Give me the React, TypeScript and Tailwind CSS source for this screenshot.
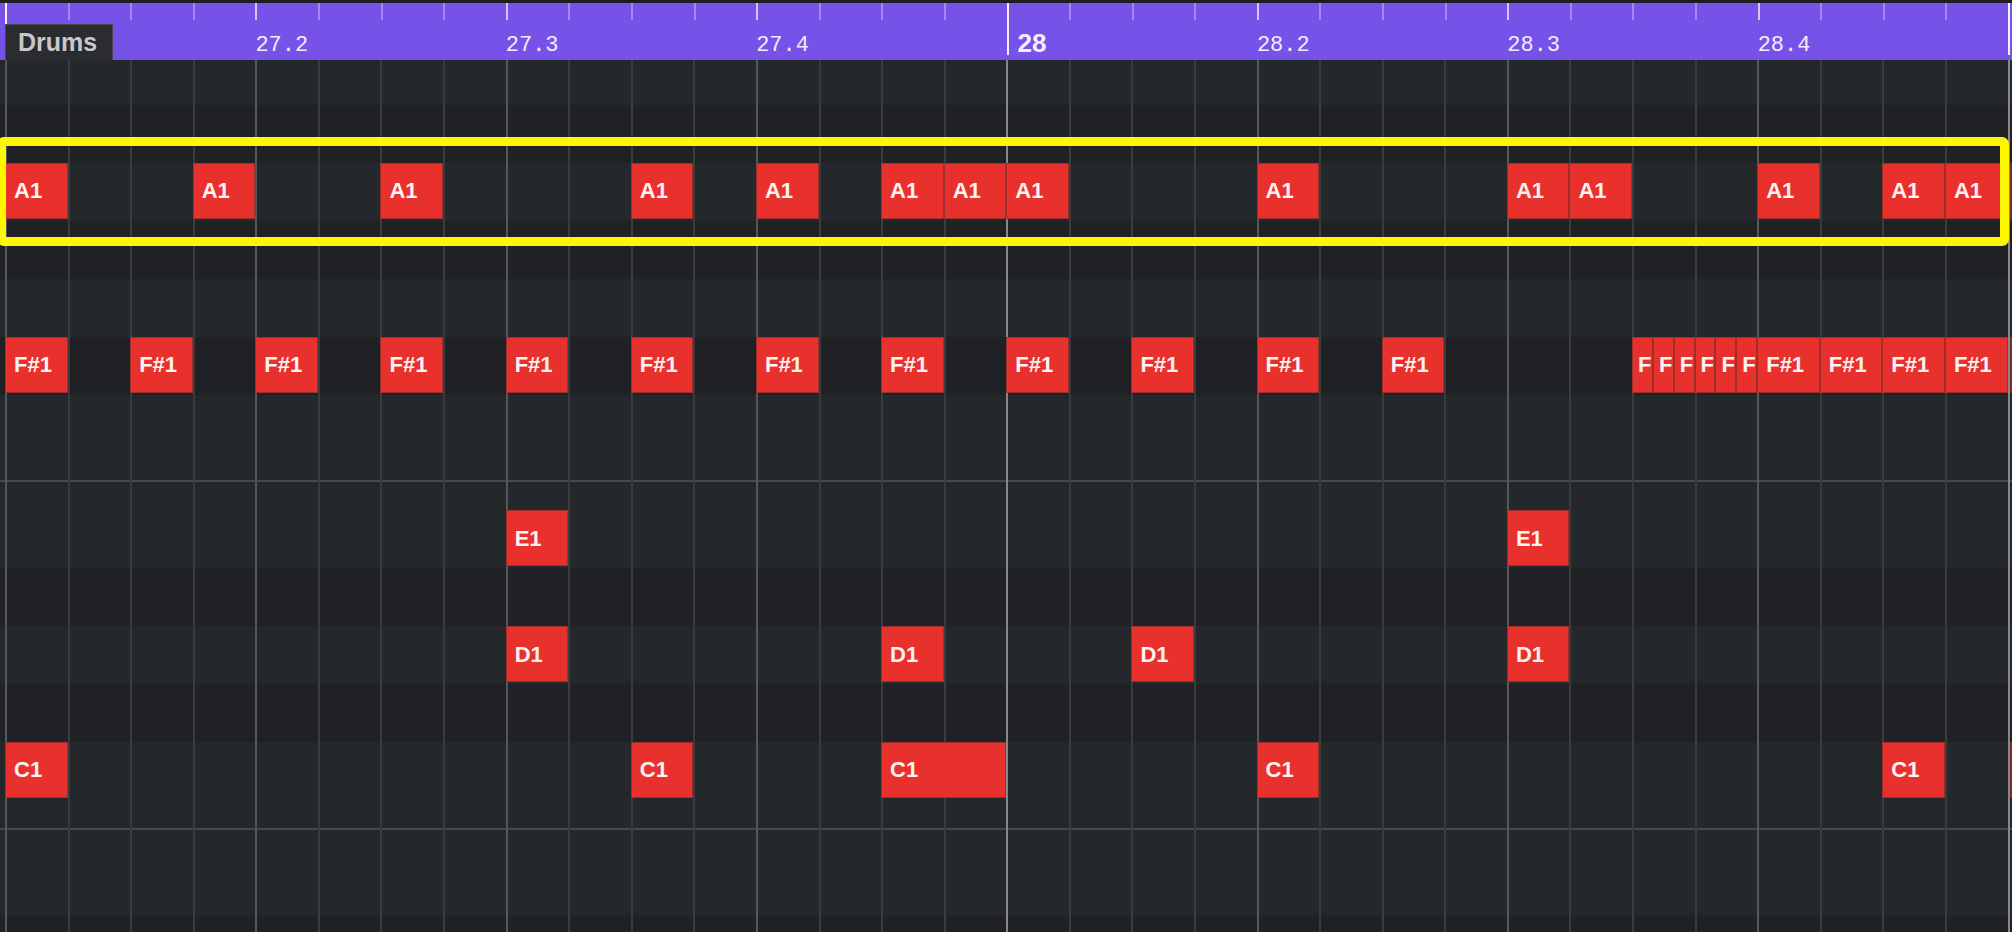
const STEPS = 32;
const ROWS = 16;

// row index in the roll -> shaded (black key) or not
const DARK_ROWS = [1, 3, 5, 9, 11, 15];
const LINE_ROWS = [7, 13];

type Note = { label: string; row: number; start: number; len: number };

// start / len in thirds of a 16th step
const hits = (label: string, row: number, steps: number[]): Note[] =>
  steps.map((s) => ({ label, row, start: s * 3, len: 3 }));

const NOTES: Note[] = [
  ...hits("A1", 2, [0, 3, 6, 10, 12, 14, 15, 16, 20, 24, 25, 28, 30, 31]),
  ...hits("F#1", 5, [0, 2, 4, 6, 8, 10, 12, 14, 16, 18, 20, 22, 28, 29, 30, 31]),
  ...[78, 79, 80, 81, 82, 83].map((t) => ({ label: "F", row: 5, start: t, len: 1 })),
  ...hits("E1", 8, [8, 24]),
  ...hits("D1", 10, [8, 14, 18, 24]),
  ...hits("C1", 12, [0, 10, 20, 30]),
  { label: "C1", row: 12, start: 42, len: 6 },
];

function Ruler() {
  return (
    <div className="relative h-[57px] shrink-0 bg-[#7752e8] flex pl-[5px] overflow-hidden">
      {Array.from({ length: STEPS }, (_, i) => {
        const bar = i % 16 === 0;
        const beat = i % 4 === 0;
        return (
          <div key={i} className="w-[62.6px] shrink-0 flex items-start">
            {bar ? (
              <span className="w-[2px] h-[52px] shrink-0 bg-[#f4f1ff]" />
            ) : (
              <span
                className={
                  beat
                    ? "w-[2px] h-[17px] shrink-0 bg-[#d2c7f9]"
                    : "w-[2px] h-[17px] shrink-0 bg-[#a08aef]"
                }
              />
            )}
            {/* bar 27's number sits under the track tag */}
            {bar && i > 0 ? (
              <span className="ml-[9px] mt-[27px] text-[26px] leading-none font-bold text-[#f2eefd] font-['Liberation_Sans',Arial,sans-serif]">
                {27 + i / 16}
              </span>
            ) : beat && !bar ? (
              <span className="ml-[-2px] mt-[32px] text-[22px] leading-none text-[#f1edfd] whitespace-nowrap font-['Liberation_Mono',monospace]">
                {`${27 + Math.floor(i / 16)}.${(i % 16) / 4 + 1}`}
              </span>
            ) : null}
          </div>
        );
      })}
      <span className="w-[2px] h-[52px] shrink-0 bg-[#f4f1ff]" />

      {/* track name tag over the ruler */}
      <div className="absolute left-[5px] top-[21px] w-[108px] h-[36px] bg-[#2b2c2f] border-t border-x border-[#47484b] pl-[12px] pt-[5px]">
        <span className="text-[25px] leading-none font-bold text-[#c8c8ca] font-['Liberation_Sans',Arial,sans-serif]">
          Drums
        </span>
      </div>
    </div>
  );
}

function Roll() {
  return (
    <div className="relative flex-1 overflow-hidden bg-[#25282b]">
      <div className="grid grid-cols-[5px_repeat(96,20.8667px)_1fr] grid-rows-[repeat(16,57.9px)] mt-[-12.8px]">
        {Array.from({ length: ROWS }, (_, r) => (
          <div
            key={`b${r}`}
            style={{ gridRow: `${r + 1}`, gridColumn: "1 / -1" }}
            className={DARK_ROWS.includes(r) ? "bg-[#202124]" : "bg-[#25282b]"}
          />
        ))}
        {LINE_ROWS.map((r) => (
          <div
            key={`h${r}`}
            style={{ gridRow: `${r + 1}`, gridColumn: "1 / -1" }}
            className="self-center h-[2px] bg-[#46494c]"
          />
        ))}
        {Array.from({ length: STEPS + 1 }, (_, i) => {
          const cls =
            i === 16 || i === 32
              ? "bg-[#85878a]"
              : i % 4 === 0
              ? "bg-[#55585b]"
              : "bg-[#393c3f]";
          return (
            <div
              key={`v${i}`}
              style={{ gridColumn: `${2 + i * 3} / span 1`, gridRow: "1 / -1" }}
              className={`w-[2px] justify-self-start ${cls}`}
            />
          );
        })}
        {NOTES.map((n, k) => (
          <div
            key={k}
            style={{ gridRow: `${n.row + 1}`, gridColumn: `${2 + n.start} / span ${n.len}` }}
            className={`self-start h-[56px] bg-[#e8302d] border border-[#9e302c] flex items-center overflow-hidden whitespace-nowrap text-[#fdf3f2] text-[22px] font-bold font-['Liberation_Sans',Arial,sans-serif] ${
              n.len < 3 ? "pl-[5px]" : "pl-[8px]"
            }`}
          >
            {n.label}
          </div>
        ))}
        {[2, 5, 12].map((r) => (
          <div
            key={`g${r}`}
            style={{ gridRow: `${r + 1}`, gridColumn: "98 / span 1" }}
            className="self-start h-[56px] ml-[2px] bg-[#7c2d2a]"
          />
        ))}
      </div>

      {/* selection highlight */}
      <div className="absolute left-[-3px] top-[77px] w-[2012px] h-[109px] border-[9px] border-[#fff700] rounded-[7px]" />
    </div>
  );
}

export default function App() {
  return (
    <div className="w-[2012px] h-[932px] overflow-hidden flex flex-col bg-[#1f1f22]">
      <div className="h-[3px] shrink-0 bg-[#1e1e21]" />
      <Ruler />
      <Roll />
    </div>
  );
}
